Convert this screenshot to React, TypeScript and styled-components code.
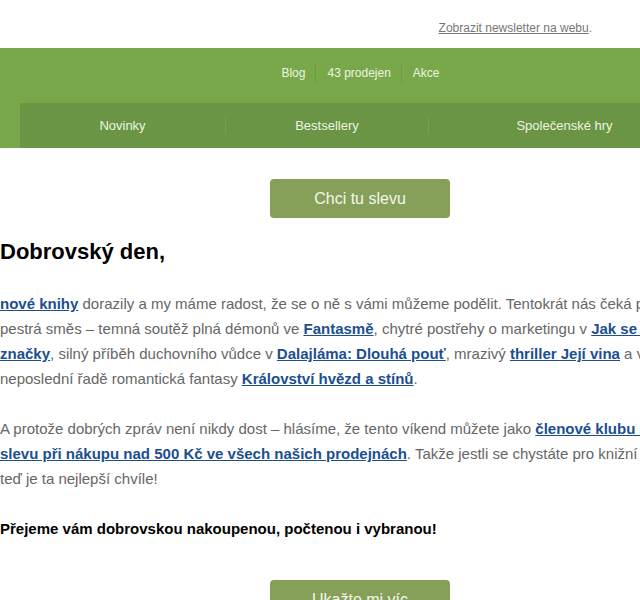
import React from 'react';
import styled, { createGlobalStyle } from 'styled-components';

const GlobalStyle = createGlobalStyle`
  html, body {
    margin: 0;
    padding: 0;
    background: #ffffff;
    overflow: hidden;
  }
  body {
    font-family: "Liberation Sans", Arial, sans-serif;
  }
`;

const Page = styled.div`
  width: 720px;
`;

const Preheader = styled.div`
  height: 48px;
  display: flex;
  align-items: center;
  justify-content: flex-end;
  padding: 8px 128px 0 0;
  box-sizing: border-box;
  font-size: 12px;
  color: #777777;
`;

const PreheaderLink = styled.a`
  color: #777777;
  text-decoration: underline;
`;

const Header = styled.div`
  background: #78a84a;
`;

const TopNav = styled.div`
  height: 55px;
  padding-bottom: 4px;
  box-sizing: border-box;
  display: flex;
  align-items: center;
  justify-content: center;
`;

const TopNavItem = styled.a<{ $first?: boolean }>`
  font-size: 12px;
  color: #eef4e2;
  text-decoration: none;
  padding: 0 10px 0 11px;
  line-height: 19px;
  border-left: ${(p) => (p.$first ? 'none' : '1px solid #6c9a40')};
`;

const MainNav = styled.div`
  margin-left: 20px;
  width: 680px;
  height: 45px;
  background: #6a9544;
  display: grid;
  grid-template-columns: 205px 203px 272px;
  align-items: center;
`;

const MainNavItem = styled.a<{ $first?: boolean }>`
  font-size: 13px;
  color: #eef4e2;
  text-decoration: none;
  text-align: center;
  line-height: 16px;
  border-left: ${(p) => (p.$first ? 'none' : '1px solid #78a050')};
`;

const ButtonRow = styled.div<{ $top: number; $bottom: number }>`
  display: flex;
  justify-content: center;
  padding-top: ${(p) => p.$top}px;
  padding-bottom: ${(p) => p.$bottom}px;
`;

const CtaButton = styled.a`
  width: 180px;
  height: 39px;
  border-radius: 4px;
  background: #86a05a;
  color: #f4f7ec;
  font-size: 16px;
  display: flex;
  align-items: center;
  justify-content: center;
  text-decoration: none;
`;

const Content = styled.div`
  padding: 0;
`;

const Greeting = styled.h1`
  margin: 0 0 26px;
  font-size: 22px;
  line-height: 26px;
  font-weight: bold;
  color: #000000;
`;

const Paragraph = styled.p`
  margin: 0 0 25px;
  font-size: 15px;
  line-height: 25px;
  color: #666666;
  white-space: nowrap;
`;

const Closing = styled(Paragraph)`
  color: #000000;
  font-weight: bold;
  margin-bottom: 39px;
`;

const BookLink = styled.a`
  color: #1b4f8f;
  font-weight: bold;
  text-decoration: underline;
`;

export default function App() {
  return (
    <>
      <GlobalStyle />
      <Page>
        <Preheader>
          <span>
            <PreheaderLink href="#">Zobrazit newsletter na webu</PreheaderLink>.
          </span>
        </Preheader>
        <Header>
          <TopNav>
            <TopNavItem href="#" $first>Blog</TopNavItem>
            <TopNavItem href="#">43 prodejen</TopNavItem>
            <TopNavItem href="#">Akce</TopNavItem>
          </TopNav>
          <MainNav>
            <MainNavItem href="#" $first>Novinky</MainNavItem>
            <MainNavItem href="#">Bestsellery</MainNavItem>
            <MainNavItem href="#">Společenské hry</MainNavItem>
          </MainNav>
        </Header>
        <ButtonRow $top={31} $bottom={21}>
          <CtaButton href="#">Chci tu slevu</CtaButton>
        </ButtonRow>
        <Content>
          <Greeting>Dobrovský den,</Greeting>
          <Paragraph>
            <BookLink href="#">nové knihy</BookLink> dorazily a my máme radost, že se o ně s vámi můžeme podělit. Tentokrát nás čeká pořádně
            <br />
            pestrá směs – temná soutěž plná démonů ve <BookLink href="#">Fantasmě</BookLink>, chytré postřehy o marketingu v <BookLink href="#">Jak se rodí</BookLink>
            <br />
            <BookLink href="#">značky</BookLink>, silný příběh duchovního vůdce v <BookLink href="#">Dalajláma: Dlouhá pouť</BookLink>, mrazivý <BookLink href="#">thriller Její vina</BookLink> a v
            <br />
            neposlední řadě romantická fantasy <BookLink href="#">Království hvězd a stínů</BookLink>.
          </Paragraph>
          <Paragraph>
            A protože dobrých zpráv není nikdy dost – hlásíme, že tento víkend můžete jako <BookLink href="#">členové klubu získat 20%</BookLink>
            <br />
            <BookLink href="#">slevu při nákupu nad 500 Kč ve všech našich prodejnách</BookLink>. Takže jestli se chystáte pro knižní úlovky,
            <br />
            teď je ta nejlepší chvíle!
          </Paragraph>
          <Closing>Přejeme vám dobrovskou nakoupenou, počtenou i vybranou!</Closing>
        </Content>
        <ButtonRow $top={0} $bottom={30}>
          <CtaButton href="#">Ukažte mi víc</CtaButton>
        </ButtonRow>
      </Page>
    </>
  );
}
